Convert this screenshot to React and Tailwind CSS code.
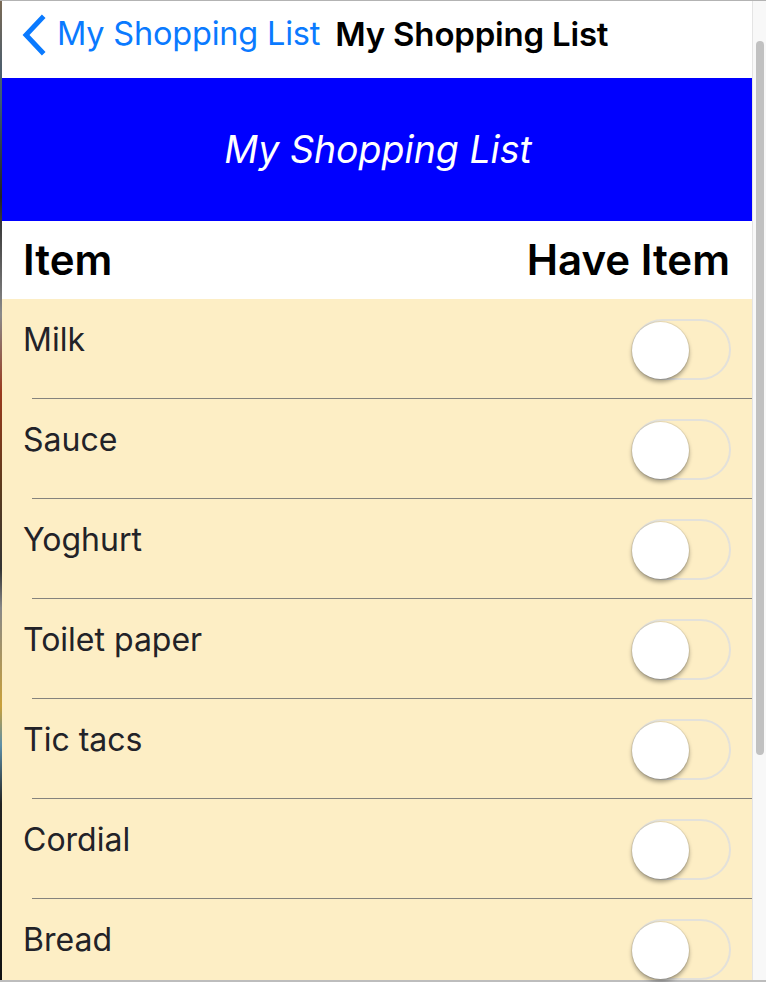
const items = ['Milk', 'Sauce', 'Yoghurt', 'Toilet paper', 'Tic tacs', 'Cordial', 'Bread'];

function Toggle() {
  return (
    <div className="relative w-[99px] h-[61px] rounded-full border-[2px] border-[#e3e1da]">
      <div className="absolute left-[-2px] top-[1px] w-[57px] h-[57px] rounded-full bg-white shadow-[0_3px_4px_rgba(0,0,0,0.35),0_0_0_1px_rgba(0,0,0,0.08)]" />
    </div>
  );
}

// shopping list page
export default function App() {
  return (
    <div
      className="w-[766px] h-[982px] overflow-hidden flex flex-col bg-white border-t border-[#b3b3b3]"
      style={{ fontFamily: 'Inter, "Noto Sans", "Liberation Sans", sans-serif' }}
    >
      <div className="flex flex-1 min-h-0">
        {/* desktop peeking on the left */}
        <div className="w-[2px] bg-[linear-gradient(#7a6a55_0%,#3b5a78_10%,#222_20%,#8a8a8a_32%,#9a3a1e_40%,#5a3a1e_50%,#333_58%,#888_62%,#c9a03a_72%,#5d8fa8_76%,#222_82%,#111_100%)]" />

        <div className="flex-1 flex flex-col min-w-0">
          {/*상단 바*/}
          <div className="h-[77px] shrink-0 flex items-center pb-[10px]">
            <svg className="ml-[16px] mr-[9px]" width="30" height="42" viewBox="0 0 30 42">
              <path d="M24 4 L8 21 L24 38" fill="none" stroke="#0a7aff" strokeWidth="5" strokeLinecap="square" />
            </svg>
            <span className="text-[32.5px] text-[#0a7aff] leading-none tracking-[-0.2px]">My Shopping List</span>
            <span className="ml-[15px] text-[33px] font-semibold text-black leading-none tracking-[-0.2px]">My Shopping List</span>
          </div>

          {/*banner*/}
          <div className="h-[143px] shrink-0 bg-[#0000ff] flex items-center justify-center">
            <span className="text-[37.5px] italic text-white leading-none mt-[1px] ml-[2px]">My Shopping List</span>
          </div>

          {/*header*/}
          <div className="h-[78px] shrink-0 flex items-center justify-between pl-[21px] pr-[22px]">
            <span className="text-[42px] font-semibold text-black leading-none">Item</span>
            <span className="text-[42px] font-semibold text-black leading-none">Have Item</span>
          </div>

          {/*list*/}
          <div className="flex-1 bg-[#fdeec5] flex flex-col">
            {items.map((name, i) => (
              <div key={name} className="flex flex-col shrink-0">
                {i > 0 && <div className="ml-[30px] h-px bg-[#85837d]" />}
                <div className="h-[99px] flex justify-between pl-[21px] pr-[21px]">
                  <span className="pt-[25px] text-[32px] text-[#222228] leading-none">{name}</span>
                  <div className="pt-[20px]">
                    <Toggle />
                  </div>
                </div>
              </div>
            ))}
          </div>
        </div>

        {/* scrollbar */}
        <div className="w-[14px] bg-[#f8f8f8] border-l border-[#e4e4e4] pt-[40px] flex justify-center">
          <div className="w-[8px] h-[714px] rounded-full bg-[#c1c1c1]" />
        </div>
      </div>
      <div className="h-[2px] bg-[#bdbdbd]" />
    </div>
  );
}
